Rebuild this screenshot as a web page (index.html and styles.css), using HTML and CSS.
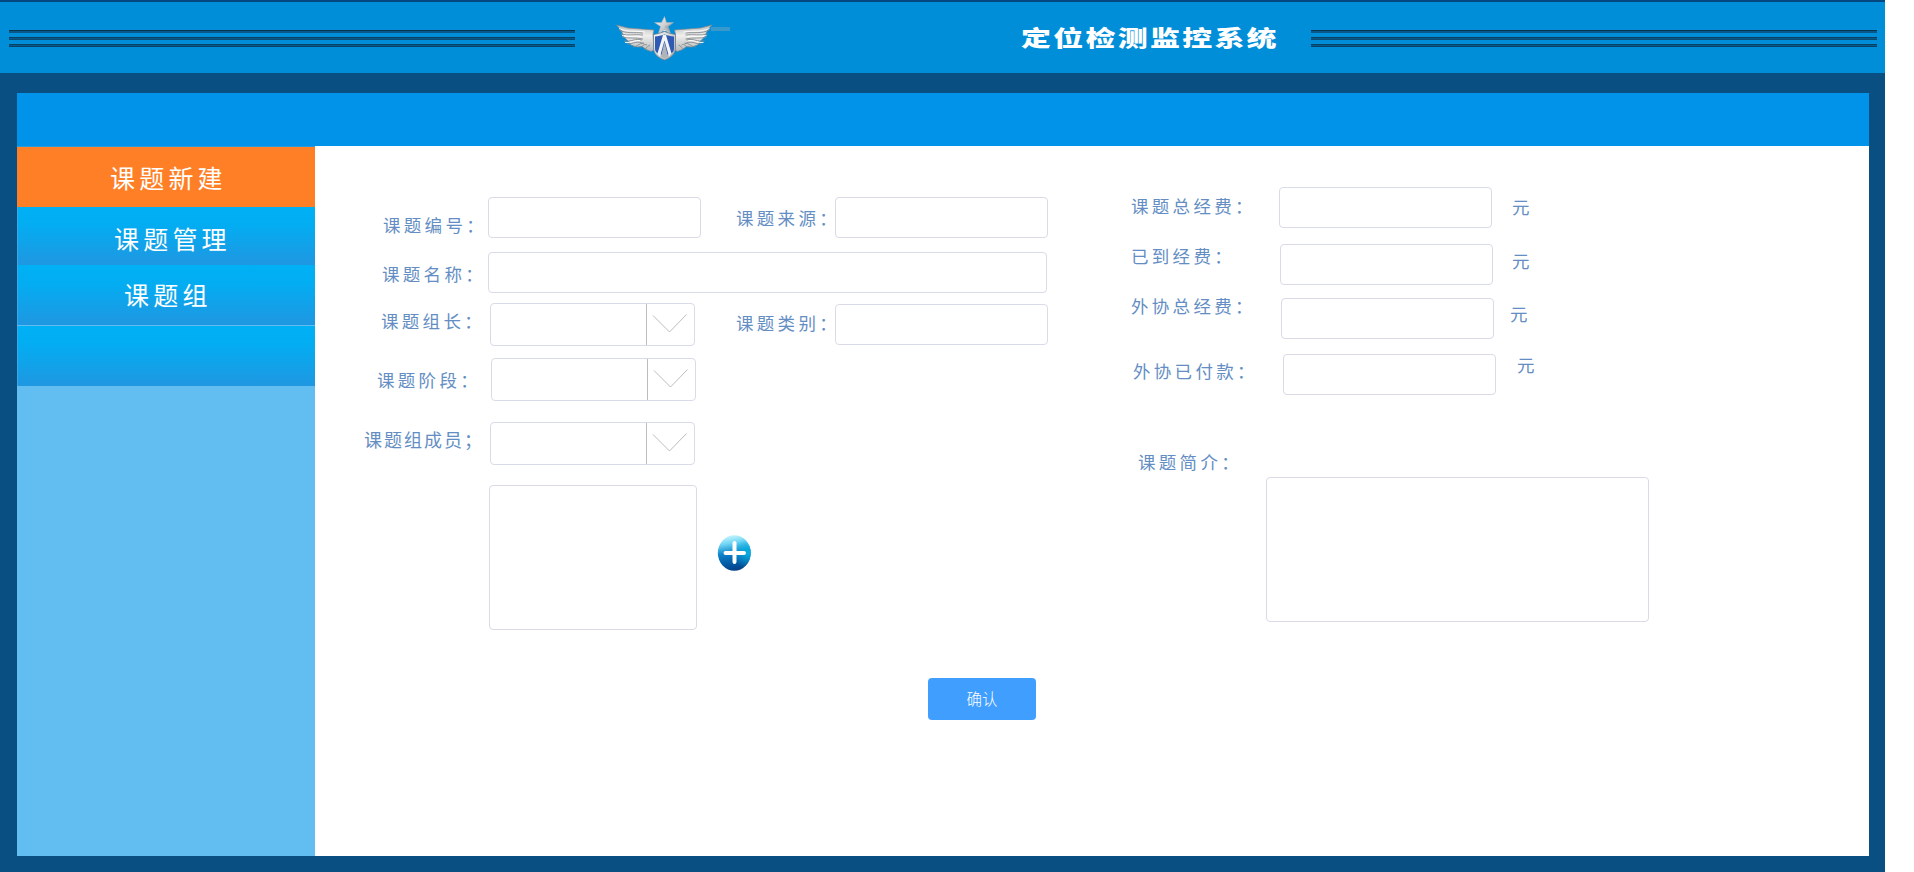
FILE: index.html
```html
<!DOCTYPE html>
<html lang="zh-CN">
<head>
<meta charset="utf-8">
<title>定位检测监控系统</title>
<link rel="stylesheet" href="styles.css">
</head>
<body>
<div class="app">
  <header class="header">
    <div class="stripes"><i></i><i></i><i></i></div>
    <svg class="logo" width="116" height="48" viewBox="0 0 116 48">
      <defs>
        <linearGradient id="wing" x1="0" y1="0" x2="0" y2="1">
          <stop offset="0" stop-color="#b9bbbd"/><stop offset=".4" stop-color="#efeeec"/><stop offset="1" stop-color="#b4b7ba"/>
        </linearGradient>
        <linearGradient id="metal" x1="0" y1="0" x2="1" y2="1">
          <stop offset="0" stop-color="#f8f8f8"/><stop offset="1" stop-color="#a6abb0"/>
        </linearGradient>
        <g id="halfwing">
          <path d="M.5 9 12 12l26 2-1 4 1 16-3 1.500-5-2-4-3-5 .5-6-2-3-4-4-4-3-7z" fill="url(#wing)" stroke="#7d868d" stroke-width=".7"/>
          <path d="M3 14c8 4 15 2 24 3M5 18c7 2 14 0 22 1M6 21c7 2 13 0 21 2M8 25c7 1 12-3 18-1M11 28c6 0 11-4 17 0M17 31c4 0 6-4 11-4M24 31c3 0 4-4 7-2M28 33c3 0 3-3 6-4" fill="none" stroke="#868b90" stroke-width=".9"/>
          <path d="M3 12.500c9 4 16 2 26 3.500M6 19.500c8 2 13 0 19 1M9 26.500c6 1 10-3 15-2" fill="none" stroke="#fff" stroke-width=".9"/>
        </g>
      </defs>
      <path d="M95 11h19v4H95z" fill="#4a9cc8" opacity=".75"/>
      <use href="#halfwing"/>
      <use href="#halfwing" transform="matrix(-1 0 0 1 96.500 0)"/>
      <path d="M43.500 18c1-5 9-5 10 0" fill="none" stroke="#dfe5e8" stroke-width="1.500"/>
      <path d="m48.500 .5 2 6 7 0-5.500 4 2.500 6.500-6-3.500-6 3.500 2-6.500-6-4 7 0z" fill="url(#metal)" stroke="#a5acb0" stroke-width=".5"/>
      <path d="M48.500 1v10l6 5.500-2.500-6 5-4-8.500 4z" fill="#858c91" opacity=".4"/>
      <path d="M37.500 18.500c4-.5 7-1.500 11-3 4 1.500 7 2.500 11 3V32c0 6-5 10-11 12-6-2-11-6-11-12z" fill="url(#metal)" stroke="#6f7f8c" stroke-width=".8"/>
      <path d="M39 20.500c3-.3 6.500-1 9.500-2 3 1 6.500 1.700 9.500 2v12c0 2-1 4-3 5l-6.500 2-6.500-2c-2-1-3-3-3-5z" fill="#2e59b5"/>
      <path d="M47 19h3l5.500 18.500-2.500 3-4.500-16-4.500 16-2.500-3z" fill="#f3f4f6"/>
      <path d="m48.500 26-3.500 14.500 3.500 2 3.500-2z" fill="#aeb4b9"/>
    </svg>
    <h1 class="title"><span class="title-text">定位检测监控系统</span></h1>
    <div class="stripes"><i></i><i></i><i></i></div>
  </header>

  <div class="panel">
    <div class="topbar"></div>
    <div class="body">
      <nav class="sidebar">
        <a class="nav nav-active">课题新建</a>
        <a class="nav nav-manage">课题管理</a>
        <a class="nav nav-group">课题组</a>
        <a class="nav nav-empty"></a>
      </nav>

      <main class="content">
        <div class="columns">
          <section class="left">
            <div class="row row-number">
              <label class="label">课题编号：</label>
              <div class="box"></div>
              <label class="label second">课题来源：</label>
              <div class="box"></div>
            </div>
            <div class="row row-name">
              <label class="label">课题名称：</label>
              <div class="box wide"></div>
            </div>
            <div class="row row-leader">
              <label class="label">课题组长：</label>
              <div class="select"><svg class="arrow" width="48" height="41"><path d="m6 11.500 16.500 16.500 17-17.500"/></svg></div>
              <label class="label second">课题类别：</label>
              <div class="box"></div>
            </div>
            <div class="row row-stage">
              <label class="label">课题阶段：</label>
              <div class="select"><svg class="arrow" width="48" height="41"><path d="m6 11.500 16.500 16.500 17-17.500"/></svg></div>
            </div>
            <div class="row row-member">
              <label class="label">课题组成员；</label>
              <div class="select"><svg class="arrow" width="48" height="41"><path d="m6 11.500 16.500 16.500 17-17.500"/></svg></div>
            </div>
            <div class="row row-list">
              <div class="box list"></div>
              <svg class="plus" width="34" height="36" viewBox="0 0 34 36">
                <defs>
                  <linearGradient id="ball" x1=".4" y1="0" x2=".55" y2="1">
                    <stop offset="0" stop-color="#c5f5fd"/><stop offset=".22" stop-color="#70d5f4"/><stop offset=".48" stop-color="#0c86cc"/><stop offset=".7" stop-color="#0563ae"/><stop offset="1" stop-color="#033f86"/>
                  </linearGradient>
                  <radialGradient id="glow" cx=".92" cy=".5" r=".45">
                    <stop offset="0" stop-color="#08b8e4" stop-opacity=".85"/><stop offset="1" stop-color="#08b8e4" stop-opacity="0"/>
                  </radialGradient>
                </defs>
                <ellipse cx="17.300" cy="18" rx="16.500" ry="17.800" fill="url(#ball)"/>
                <ellipse cx="17.300" cy="18" rx="16.500" ry="17.800" fill="url(#glow)"/>
                <path d="M17.500 8v19M8.500 18H27" stroke="#fff" stroke-width="4" stroke-linecap="round"/>
              </svg>
            </div>
          </section>

          <section class="right">
            <div class="row fee-total">
              <label class="label">课题总经费：</label><div class="box"></div><span class="unit">元</span>
            </div>
            <div class="row fee-arrived">
              <label class="label">已到经费：</label><div class="box"></div><span class="unit">元</span>
            </div>
            <div class="row fee-outer">
              <label class="label">外协总经费：</label><div class="box"></div><span class="unit">元</span>
            </div>
            <div class="row fee-paid">
              <label class="label">外协已付款：</label><div class="box"></div><span class="unit">元</span>
            </div>
            <label class="label intro-label">课题简介：</label>
            <div class="box intro"></div>
          </section>
        </div>
        <button class="confirm" type="button">确认</button>
      </main>
    </div>
  </div>
</div>
</body>
</html>
```
FILE: styles.css
```css
* { box-sizing: border-box; }

body {
  margin: 0;
  background: #fff;
  font-family: "Noto Sans CJK SC", sans-serif;
}

.app {
  width: 1885px;
  height: 872px;
  background: #094f82;
  border-top: 2px solid #054880;
  overflow: hidden;
}

/* header */
.header {
  display: flex;
  align-items: flex-start;
  height: 71px;
  padding-left: 9px;
  background: #018ed8;
}

.stripes {
  display: flex;
  flex-direction: column;
  gap: 4px;
  flex: none;
  width: 566px;
  margin-top: 28px;
}

.stripes i {
  height: 3px;
  background: #08588a;
  border-top: 1px solid #073450;
}

.stripes i:nth-child(2) { border-top-color: #083f63; border-bottom: 1px solid #084c76; }
.stripes i:nth-child(3) { border-top-color: #084468; border-bottom: 1px solid #084468; }

.logo {
  flex: none;
  margin: 14px 0 0 41px;
}

.title {
  flex: none;
  width: 579px;
  margin: 16px 0 0;
  padding-left: 289px;
  color: #fff;
  font-size: 22px;
  font-weight: 900;
  line-height: 36px;
  white-space: nowrap;
}

.title-text {
  display: inline-block;
  letter-spacing: 1.700px;
  transform: scaleX(1.36);
  transform-origin: 0 50%;
}

/* panel */
.panel {
  width: 1852px;
  height: 763px;
  margin: 20px 0 0 17px;
  background: #fff;
}

.topbar { height: 53px; background: #0093e9; }

.body { display: flex; height: 710px; }

.sidebar {
  flex: none;
  width: 298px;
  background: #62bef1;
  border-top: 1px solid #2b9be0;
}

.nav {
  display: block;
  height: 60px;
  background: linear-gradient(#00b0f5, #03adf2 30%, #1f97e1);
  border-left: 1px solid #39a9e8;
  color: #fff;
  font-size: 25px;
  font-weight: 400;
  line-height: 58px;
  letter-spacing: 4.200px;
  white-space: nowrap;
}

.nav-active { background: #ff7f27; border-left-color: #ff7f27; padding-left: 92px; line-height: 60px; }
.nav-manage { height: 58px; padding-left: 96px; line-height: 63px; }
.nav-group { padding-left: 106px; }
.nav-empty { margin-top: 1px; }

/* form */
.content { width: 1554px; }

.columns { display: flex; height: 532px; }

.left { flex: none; width: 801px; padding-top: 51px; }
.right { padding-top: 41px; }

.row { display: flex; align-items: flex-start; }

.label, .unit {
  flex: none;
  color: #648ec3;
  font-size: 17.500px;
  font-weight: 400;
  line-height: 20px;
  letter-spacing: 3.300px;
  white-space: nowrap;
}

.left .label { width: 173px; }
.left .second { width: 134px; }

.box, .select {
  flex: none;
  height: 41px;
  width: 213px;
  background: #fff;
  border: 1px solid #d9dce6;
  border-radius: 4px;
}

.select {
  display: flex;
  justify-content: flex-end;
  width: 205px;
  height: 43px;
}

.arrow { border-left: 1px solid #bcbcbc; }
.arrow path { fill: none; stroke: #bdbdbd; stroke-width: 1; }

.row-number .label { padding: 18px 0 0 68px; }
.row-number .second { padding: 11px 0 0 35px; }

.row-name { margin-top: 14px; }
.row-name .label { padding: 12px 0 0 67px; }
.wide { width: 559px; }

.row-leader { margin-top: 10px; }
.row-leader .label { width: 175px; padding: 8px 0 0 66px; }
.row-leader .second { width: 140px; padding: 10px 0 0 41px; }
.row-leader .box { margin-top: 1px; }

.row-stage { margin-top: 12px; }
.row-stage .label { width: 176px; padding: 12px 0 0 62px; }

.row-member { margin-top: 21px; }
.row-member .label {
  width: 175px;
  padding: 7px 0 0 49px;
  font-size: 18px;
  letter-spacing: 2px;
}

.row-list { margin-top: 20px; padding-left: 174px; }
.list { width: 208px; height: 145px; }
.plus { margin: 50px 0 0 20px; }

.fee-total .label { width: 163px; padding: 9px 0 0 15px; }
.fee-total .unit { margin: 10px 0 0 20px; }

.fee-arrived { margin-top: 16px; }
.fee-arrived .label { width: 164px; padding: 2px 0 0 15px; }
.fee-arrived .unit { margin: 7px 0 0 19px; }

.fee-outer { margin-top: 13px; }
.fee-outer .label { width: 165px; margin-top: -2px; padding-left: 15px; }
.fee-outer .unit { margin: 6px 0 0 16px; }

.fee-paid { margin-top: 15px; }
.fee-paid .label { width: 167px; padding: 7px 0 0 17px; }
.fee-paid .unit { margin: 1px 0 0 21px; }

.intro-label { display: block; margin: 57px 0 5px 22px; }
.intro { width: 383px; height: 145px; margin-left: 150px; }

.confirm {
  display: block;
  width: 108px;
  height: 42px;
  margin-left: 613px;
  padding: 0 0 2px;
  background: #409eff;
  border: 0;
  border-radius: 4px;
  color: #fff;
  font-family: inherit;
  font-size: 15.500px;
  font-weight: 300;
  line-height: 40px;
}
```
